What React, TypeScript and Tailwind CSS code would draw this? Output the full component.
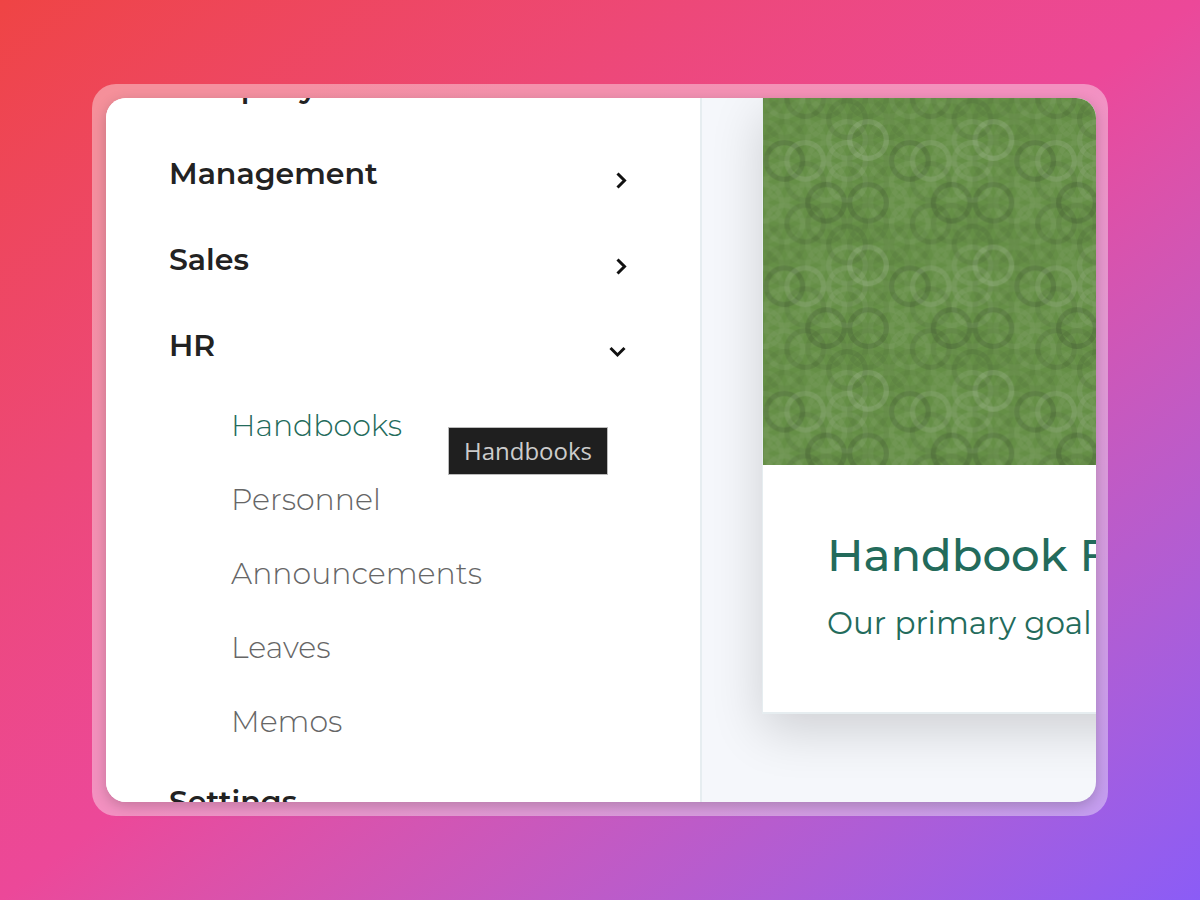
import { useState } from "react";

const step = 20.9;
const tile = step * 6;

// Row by row shades of the ring pattern: positive is light, negative is dark.
const rings: number[][] = [
  [0.05, -0.04, 0.03, 0.04, 0.09, 0.15],
  [0.05, -0.15, 0.13, 0.05, 0.1, -0.05],
  [0.04, 0.05, -0.08, 0.06, 0.08, -0.05],
  [0.06, 0.04, 0.04, -0.15, 0.04, -0.15],
  [0.04, 0.06, -0.11, -0.07, -0.05, -0.06],
  [-0.04, -0.05, 0.04, 0.04, -0.09, -0.05],
];

function Pattern() {
  return (
    <svg className="block h-full w-full" aria-hidden="true">
      <defs>
        <pattern id="rings" width={tile} height={tile} patternUnits="userSpaceOnUse" x="0.5" y="42">
          <rect width={tile} height={tile} fill="#658f46" />
          {rings.flatMap((row, y) =>
            row.flatMap((v, x) =>
              [-tile, 0, tile].flatMap((dx) =>
                [-tile, 0, tile].map((dy) => (
                  <circle
                    key={`${x}-${y}-${dx}-${dy}`}
                    cx={x * step + dx}
                    cy={y * step + dy}
                    r="18.3"
                    fill="none"
                    stroke={v > 0 ? "#ddd" : "#222"}
                    strokeOpacity={Math.abs(v)}
                    strokeWidth="5.2"
                  />
                )),
              ),
            ),
          )}
        </pattern>
      </defs>
      <rect width="100%" height="100%" fill="url(#rings)" />
    </svg>
  );
}

function Chevron({ open }: { open: boolean }) {
  return (
    <svg
      className={open ? "mr-0.5 h-4 w-5 translate-y-2" : "h-5 w-3 translate-y-2"}
      viewBox={open ? "0 0 20 16" : "0 0 12 20"}
      fill="none"
      stroke="#111"
      strokeWidth="3"
      aria-hidden="true"
    >
      <path d={open ? "M4.5 3l7 7 7-7" : "M1.5 2.5l7 7-7 7"} />
    </svg>
  );
}

const groups = ["Management", "Sales", "HR"];
const pages = ["Handbooks", "Personnel", "Announcements", "Leaves", "Memos"];

export default function App() {
  const [open, setOpen] = useState("HR");
  return (
    <div className="flex h-screen bg-linear-to-br from-[#ef4444] via-[#ec4899] to-[#8b5cf6] px-23 py-21 font-['Montserrat','Inter',sans-serif]">
      <div className="flex min-w-0 flex-1 rounded-3xl bg-white/40 pt-3.5 pr-3 pb-3.5 pl-3.5">
        <div className="flex min-w-0 flex-1 overflow-hidden rounded-[20px] bg-[#f5f7fb] shadow-[0_4px_14px_rgba(0,0,0,0.2)]">
          <nav className="-mt-[54px] w-149 shrink-0 border-r-2 border-[#e6edf0] bg-white pr-18 pl-[63px]">
            <a href="#" className="flex h-[86px] w-full items-center text-[30px] font-semibold text-[#222]">
              Company
            </a>
            {groups.map((name) => (
              <button
                key={name}
                type="button"
                aria-expanded={open === name}
                onClick={() => setOpen(open === name ? "" : name)}
                className="flex h-[86px] w-full items-center justify-between text-left text-[30px] font-semibold text-[#222]"
              >
                {name}
                <Chevron open={open === name} />
              </button>
            ))}
            {open === "HR" && (
              <ul className="pl-[62px]">
                {pages.map((name, i) => (
                  <li key={name} className="relative h-[74px]">
                    <a
                      href="#"
                      className={
                        i === 0
                          ? "flex h-full items-center text-[30px] font-light text-[#236b5b]"
                          : "flex h-full items-center text-[30px] font-light text-[#666]"
                      }
                    >
                      {name}
                    </a>
                    {i === 0 && (
                      <span
                        role="tooltip"
                        className="absolute top-[39px] left-[217px] border border-[#bbb] bg-[#1f1f1f] px-[15px] py-2 font-['Open_Sans',sans-serif] text-2xl leading-[30px] text-[#ccc]"
                      >
                        Handbooks
                      </span>
                    )}
                  </li>
                ))}
              </ul>
            )}
            <a href="#" className="flex h-[86px] w-full items-center text-[30px] font-semibold text-[#222]">
              Settings
            </a>
          </nav>
          <main className="min-w-0 flex-1 pl-15">
            <article className="w-150 border border-t-0 border-b-2 border-[#e6edf0] bg-white text-[#236b5b] shadow-[0_16px_48px_rgba(0,0,0,0.16)]">
              <div className="h-[367px]">
                <Pattern />
              </div>
              <div className="h-[247px] px-16 pt-15">
                <h2 className="text-[45px] leading-[60px] font-medium">Handbook FAQ</h2>
                <p className="mt-4 text-[31px] leading-11">Our primary goal</p>
              </div>
            </article>
          </main>
        </div>
      </div>
    </div>
  );
}
